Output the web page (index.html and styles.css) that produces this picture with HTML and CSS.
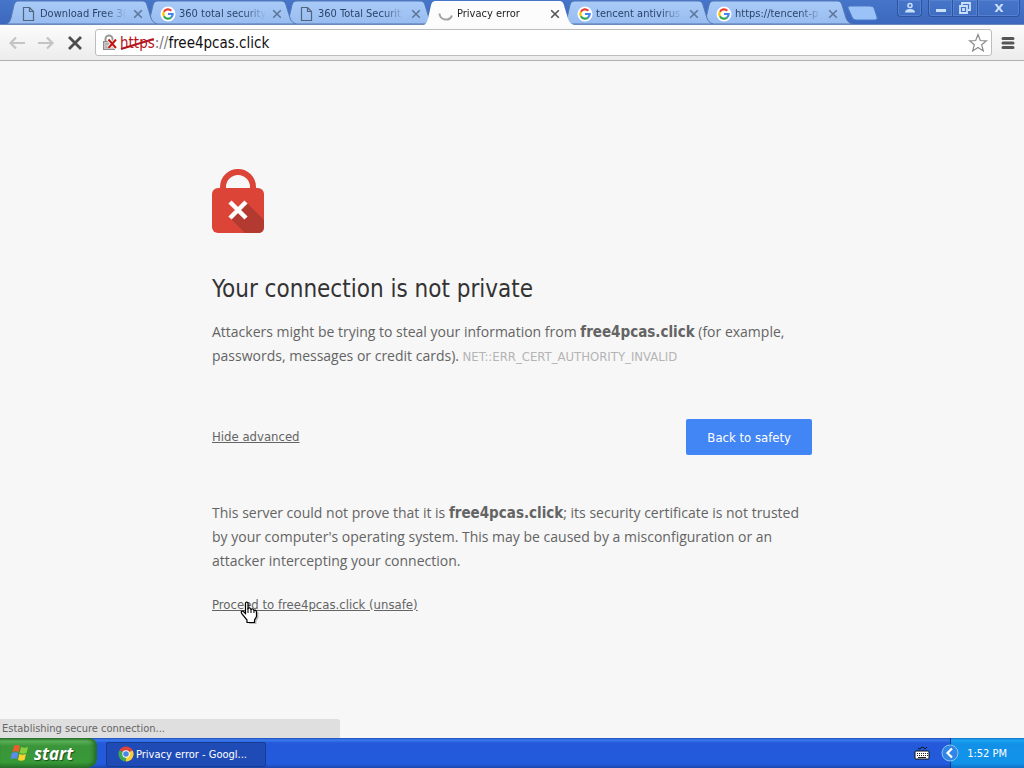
FILE: index.html
```html
<!DOCTYPE html>
<html lang="en">
<head>
    <meta charset="UTF-8">
    <meta name="viewport" content="width=device-width, initial-scale=1.0">
    <title>Privacy error</title>
    <link rel="stylesheet" href="styles.css">
</head>
<body>
    <!-- shared shapes -->
    <svg class="defs" width="0" height="0" aria-hidden="true">
        <defs>
            <linearGradient id="tabFill" x1="0" y1="0" x2="0" y2="1">
                <stop offset="0" stop-color="#a9cbf8"/>
                <stop offset="1" stop-color="#98bcf0"/>
            </linearGradient>
            <symbol id="tabShape" viewBox="0 0 150 24" preserveAspectRatio="none">
                <path d="M0 24C2 23 3 21 4 18L7 5C8 2 9 1 12 1H135C138 1 139 2 140 5L144 18C145 21 147 23 150 24Z"/>
            </symbol>
            <symbol id="doc" viewBox="0 0 16 16">
                <path d="M2.500 1.500H8.500L12.500 5.500V14.500H2.500ZM8.500 1.500V5.500H12.500" fill="none" stroke="#51657f" stroke-width="1.200"/>
            </symbol>
            <symbol id="google" viewBox="0 0 16 16">
                <circle cx="8" cy="8" r="7.500" fill="#fff"/>
                <g fill="none" stroke-width="2.200">
                    <path d="M3.900 5.700A4.700 4.700 0 0 1 11.300 4.700" stroke="#ea4335"/>
                    <path d="M3.900 10.300A4.700 4.700 0 0 1 3.900 5.700" stroke="#fbbc05"/>
                    <path d="M11 11.600A4.700 4.700 0 0 1 3.900 10.300" stroke="#34a853"/>
                    <path d="M8 8H12.700A4.700 4.700 0 0 1 11 11.600" stroke="#4285f4"/>
                </g>
            </symbol>
            <symbol id="cross" viewBox="0 0 10 10">
                <path d="M1.200 1.200L8.800 8.800M8.800 1.200L1.200 8.800" fill="none" stroke="currentColor" stroke-width="1.600"/>
            </symbol>
        </defs>
    </svg>

    <div class="window">
        <header class="tabstrip">
            <div class="tabs">
                <div class="tab">
                    <svg class="tab-bg"><use href="#tabShape"/></svg>
                    <svg class="favicon"><use href="#doc"/></svg>
                    <button class="tab-title">Download Free 3(</button>
                    <button class="tab-close" aria-label="Close tab"><svg><use href="#cross"/></svg></button>
                </div>
                <div class="tab">
                    <svg class="tab-bg"><use href="#tabShape"/></svg>
                    <svg class="favicon"><use href="#google"/></svg>
                    <button class="tab-title">360 total security</button>
                    <button class="tab-close" aria-label="Close tab"><svg><use href="#cross"/></svg></button>
                </div>
                <div class="tab">
                    <svg class="tab-bg"><use href="#tabShape"/></svg>
                    <svg class="favicon"><use href="#doc"/></svg>
                    <button class="tab-title">360 Total Securit</button>
                    <button class="tab-close" aria-label="Close tab"><svg><use href="#cross"/></svg></button>
                </div>
                <div class="tab active">
                    <svg class="tab-bg"><use href="#tabShape"/></svg>
                    <svg class="favicon" viewBox="0 0 16 16"><path d="M1.500 7.500A6.500 6.500 0 0 0 14 9.500" fill="none" stroke="#a3a3a3" stroke-width="2"/></svg>
                    <button class="tab-title">Privacy error</button>
                    <button class="tab-close" aria-label="Close tab"><svg><use href="#cross"/></svg></button>
                </div>
                <div class="tab">
                    <svg class="tab-bg"><use href="#tabShape"/></svg>
                    <svg class="favicon"><use href="#google"/></svg>
                    <button class="tab-title">tencent antivirus</button>
                    <button class="tab-close" aria-label="Close tab"><svg><use href="#cross"/></svg></button>
                </div>
                <div class="tab">
                    <svg class="tab-bg"><use href="#tabShape"/></svg>
                    <svg class="favicon"><use href="#google"/></svg>
                    <button class="tab-title">https://tencent-p</button>
                    <button class="tab-close" aria-label="Close tab"><svg><use href="#cross"/></svg></button>
                </div>
            </div>
            <button class="new-tab" aria-label="New tab">
                <svg width="32" height="16" viewBox="0 0 32 16"><path d="M3 1H23Q26 1 27 3L30 12Q31 15 28 15H9Q6 15 5 12L1 3Q0 1 3 1Z" fill="#9cc3f7" stroke="#4a7bc9"/></svg>
            </button>
            <div class="window-controls">
                <button class="control user" aria-label="User">
                    <svg width="12" height="12" viewBox="0 0 12 12"><circle cx="6" cy="3.500" r="2" fill="none" stroke="#c9e0fb" stroke-width="1.500"/><path d="M1 10.500Q1 7 6 7T11 10.500Z" fill="#c9e0fb"/></svg>
                </button>
                <div class="control-group">
                    <button class="control minimize" aria-label="Minimize">
                        <svg width="12" height="12" viewBox="0 0 12 12"><rect x="1" y="7" width="10" height="3" fill="#c9e0fb"/></svg>
                    </button>
                    <button class="control restore" aria-label="Restore">
                        <svg width="14" height="14" viewBox="0 0 14 14"><path d="M4 4V2H12V9H10M2 5H9V12H2ZM5 8H6V9H5Z" fill="none" stroke="#c9e0fb" stroke-width="1.800"/></svg>
                    </button>
                    <button class="control close" aria-label="Close">
                        <svg width="12" height="12" viewBox="0 0 12 12"><path d="M1.500 2H4L6 4.500L8 2H10.500L7.500 6L10.500 10H8L6 7.500L4 10H1.500L4.500 6Z" fill="#c9e0fb"/></svg>
                    </button>
                </div>
            </div>
        </header>

        <nav class="toolbar">
            <button class="tool" aria-label="Back">
                <svg width="18" height="16" viewBox="0 0 18 16"><path d="M17 8H3M8 2.500L2.500 8L8 13.500" fill="none" stroke="#c4c4c4" stroke-width="2.200"/></svg>
            </button>
            <button class="tool" aria-label="Forward">
                <svg width="18" height="16" viewBox="0 0 18 16"><path d="M1 8H15M10 2.500L15.500 8L10 13.500" fill="none" stroke="#c4c4c4" stroke-width="2.200"/></svg>
            </button>
            <button class="tool" aria-label="Stop">
                <svg width="18" height="16" viewBox="0 0 18 16"><path d="M3 2L15 14M15 2L3 14" fill="none" stroke="#4d4d4d" stroke-width="2.800"/></svg>
            </button>
            <div class="omnibox">
                <svg width="16" height="18" viewBox="0 0 16 18">
                    <path d="M3.500 8V5A3.500 3.500 0 0 1 10.500 5V8" fill="none" stroke="#999" stroke-width="2"/>
                    <rect x="1.500" y="7.500" width="11" height="8" fill="#c6c6c6" stroke="#8b8b8b"/>
                    <path d="M3 10H9M3 13H9" stroke="#a2a2a2"/>
                    <path d="M6.500 5.500L14 14M14 5.500L6.500 14" stroke="#fff" stroke-width="3.500"/>
                    <path d="M6.500 5.500L14 14M14 5.500L6.500 14" stroke="#c1150f" stroke-width="2"/>
                </svg>
                <label class="scheme" for="url"><span class="bad">https<svg class="strike" viewBox="0 0 36 14" preserveAspectRatio="none"><path d="M1 12L35 2" stroke="#b4141c" stroke-width="2"/></svg></span>://</label>
                <input id="url" class="url" type="text" value="free4pcas.click">
                <button class="star" aria-label="Bookmark this page">
                    <svg width="20" height="20" viewBox="0 0 20 20"><path d="M10 1.500L12.300 7.500L18.500 7.800L13.700 11.800L15.300 18L10 14.500L4.700 18L6.300 11.800L1.500 7.800L7.700 7.500Z" fill="#fff" stroke="#8a8a8a" stroke-width="1.200"/></svg>
                </button>
            </div>
            <button class="menu" aria-label="Menu">
                <svg width="14" height="14" viewBox="0 0 14 14"><path d="M2 2.500H12M2 7H12M2 11.500H12" stroke="#555" stroke-width="3" stroke-linecap="round"/></svg>
            </button>
        </nav>

        <main class="page">
            <div class="interstitial">
                <svg class="lock" width="52" height="64" viewBox="0 0 52 64">
                    <path d="M11 22V18A15 15 0 0 1 41 18V22" fill="none" stroke="#db4437" stroke-width="6"/>
                    <rect y="19" width="52" height="45" rx="6" fill="#db4437"/>
                    <path d="M34 33L52 51V58Q52 64 46 64H33L18 49L26 41Z" fill="#b23a31"/>
                    <path d="M18 33L34 49M34 33L18 49" stroke="#fff" stroke-width="4.500"/>
                </svg>
                <h1>Your connection is not private</h1>
                <p>Attackers might be trying to steal your information from <strong>free4pcas.click</strong> (for example, passwords, messages or credit cards). <span class="error-code">NET::ERR_CERT_AUTHORITY_INVALID</span></p>
                <div class="actions">
                    <a class="small-link" href="#details">Hide advanced</a>
                    <button class="primary">Back to safety</button>
                </div>
                <div id="details">
                    <p>This server could not prove that it is <strong>free4pcas.click</strong>; its security certificate is not trusted by your computer's operating system. This may be caused by a misconfiguration or an attacker intercepting your connection.</p>
                    <div class="proceed">
                        <a class="small-link" href="#proceed">Proceed to free4pcas.click (unsafe)</a>
                        <svg class="cursor" width="20" height="24" viewBox="0 0 20 24">
                            <path d="M6 2Q7 0 8 2V8Q10 6 11 8.500Q13 7 14 9.500Q16 8.500 16.500 11V16L14.500 19V22H7V19L2 13Q0 10 3 10L6 13Z" transform="translate(2 1)" fill="#000" opacity=".25"/>
                            <path d="M5.500 2Q6.500 0 8 2V7.500Q10 6 11 8.500Q13 7 14 9.500Q16 8.500 16.500 11V15.500L14.500 19V21.500H7V19L2 13Q0 10 3 10L5.500 12.500Z" fill="#fff" stroke="#000" stroke-width="1.200"/>
                            <path d="M8 7V12M11 8.500V12M14 9.500V12" stroke="#000"/>
                        </svg>
                    </div>
                </div>
            </div>
            <div class="status">Establishing secure connection...</div>
        </main>

        <footer class="taskbar">
            <button class="start">
                <svg width="20" height="18" viewBox="0 0 20 18">
                    <path d="M4 2Q7 0 10 2L8.500 8Q5.500 6.500 2.500 8Z" fill="#ee5c2c"/>
                    <path d="M11 3Q14 4.500 18 3L16.500 9Q13 10.500 9.500 9Z" fill="#86cf3b"/>
                    <path d="M2 9Q5 7.500 8.300 9L7 15Q4 13.500 0.500 15Z" fill="#5a8cf0"/>
                    <path d="M9.300 10Q12.500 11.500 16 10L14.500 16Q11 17.500 8 16Z" fill="#fbd130"/>
                </svg>
                <span>start</span>
            </button>
            <button class="task">
                <svg width="16" height="16" viewBox="0 0 16 16">
                    <path d="M8 8L1.500 4.200A7.500 7.500 0 0 1 14.500 4.200Z" fill="#e0453a"/>
                    <path d="M8 8L14.500 4.200A7.500 7.500 0 0 1 8 15.500Z" fill="#fbcf3a"/>
                    <path d="M8 8V15.500A7.500 7.500 0 0 1 1.500 4.200Z" fill="#42a754"/>
                    <path d="M8 4.200H14.500V5H8Z" fill="#e0453a"/>
                    <circle cx="8" cy="8" r="3.700" fill="#fff"/>
                    <circle cx="8" cy="8" r="2.800" fill="#4a86e4"/>
                </svg>
                <span>Privacy error - Googl...</span>
            </button>
            <svg class="keyboard" width="16" height="14" viewBox="0 0 16 14">
                <path d="M4 2Q5 4 7 2T10 2T13 1" fill="none" stroke="#111"/>
                <rect x="1" y="5" width="14" height="8" rx="1" fill="#fff" stroke="#111"/>
                <path d="M3 7.500H14M3 9.500H14" stroke="#222" stroke-dasharray="1 1"/>
                <path d="M4 11.500H12" stroke="#222"/>
            </svg>
            <div class="tray">
                <button class="expand" aria-label="Show hidden icons">
                    <svg width="18" height="18" viewBox="0 0 18 18"><circle cx="9" cy="9" r="8" fill="#2f86e4" stroke="#8cc4f5"/><path d="M11 4.500L6.500 9L11 13.500" fill="none" stroke="#fff" stroke-width="2.200"/></svg>
                </button>
                <time>1:52 PM</time>
            </div>
        </footer>
    </div>
</body>
</html>
```
FILE: styles.css
```css
* {
    margin: 0;
    padding: 0;
    box-sizing: border-box;
}

body {
    font-family: "DejaVu Sans Condensed", "DejaVu Sans", sans-serif;
    font-size: 11px;
    color: #646464;
    background: #f7f7f7;
}

button {
    font: inherit;
    color: inherit;
    background: none;
    border: none;
}

svg {
    display: block;
    flex-shrink: 0;
}

.defs {
    position: absolute;
}

.window {
    display: flex;
    flex-direction: column;
    min-height: 100vh;
}

/* Tabs */
.tabstrip {
    display: flex;
    height: 25px;
    background: linear-gradient(#4675ca, #3c68bd);
    border-bottom: 1px solid #6c89b8;
}

.tabs {
    display: flex;
    padding-left: 7px;
}

.tab {
    position: relative;
    display: flex;
    align-items: center;
    width: 150px;
    height: 25px;
    margin-right: -11px;
    padding: 2px 12px 0 14px;
    color: #2c4468;
}

/* each tab lies over the one on its right */
.tab:nth-child(1) {
    z-index: 5;
}

.tab:nth-child(2) {
    z-index: 4;
}

.tab:nth-child(3) {
    z-index: 3;
}

.tab:nth-child(5) {
    z-index: 2;
}

.tab.active {
    z-index: 6;
    color: #222;
}

.tab-bg {
    position: absolute;
    left: 0;
    top: 0;
    width: 150px;
    height: 24px;
    fill: url(#tabFill);
    stroke: #5379b4;
}

.tab.active .tab-bg {
    height: 25px;
    fill: #fcfcfc;
    stroke: none;
}

.favicon {
    position: relative;
    width: 16px;
    height: 16px;
}

.tab-title {
    position: relative;
    flex: 1;
    height: 18px;
    margin: 0 6px 0 3px;
    overflow: hidden;
    text-align: left;
    white-space: nowrap;
    -webkit-mask-image: linear-gradient(to right, #000 75%, transparent);
    mask-image: linear-gradient(to right, #000 75%, transparent);
}

.tab-close {
    position: relative;
    margin-right: 2px;
    color: #5f7698;
}

.active .tab-close {
    color: #555;
}

.tab-close svg {
    width: 10px;
    height: 10px;
}

.new-tab {
    align-self: flex-start;
    margin: 5px 0 0 6px;
}

.window-controls {
    display: flex;
    align-items: flex-start;
    gap: 6px;
    margin-left: auto;
    padding-right: 4px;
}

.control-group {
    display: flex;
}

.control {
    display: flex;
    align-items: center;
    justify-content: center;
    width: 25px;
    height: 17px;
    border: 1px solid #2d559f;
    border-top: none;
    box-shadow: inset 0 0 0 1px #5580d0;
}

.control + .control {
    border-left: none;
}

.user {
    border-radius: 0 0 4px 4px;
}

.minimize {
    border-radius: 0 0 0 4px;
}

.close {
    width: 42px;
    border-radius: 0 0 4px 0;
}

/* Toolbar */
.toolbar {
    display: flex;
    align-items: center;
    height: 36px;
    padding: 0 9px 0 8px;
    background: linear-gradient(#fcfcfc, #ececec);
    border-bottom: 1px solid #b0b0b0;
}

.tool {
    margin-right: 11px;
}

.omnibox {
    display: flex;
    flex: 1;
    align-items: center;
    height: 27px;
    margin-right: 9px;
    padding: 0 3px 0 6px;
    font-size: 15px;
    background: #fff;
    border: 1px solid #bdbdbd;
    border-radius: 3px;
}

.scheme {
    margin-left: 2px;
    color: #777;
}

.bad {
    position: relative;
    color: #b4141c;
}

.strike {
    position: absolute;
    left: 0;
    top: 3px;
    width: 100%;
    height: 14px;
}

.url {
    flex: 1;
    min-width: 0;
    font: inherit;
    color: #111;
    background: none;
    border: none;
    outline: none;
}

/* Warning page */
.page {
    position: relative;
    flex: 1;
    padding: 108px 16px 40px;
    background: #f7f7f7;
}

.interstitial {
    max-width: 600px;
    margin: 0 auto;
}

h1 {
    margin: 41px 0 15px;
    font-size: 24px;
    font-weight: normal;
    line-height: 31px;
    color: #333;
}

p {
    font-family: "Open Sans", sans-serif;
    font-size: 14px;
    line-height: 24px;
}

strong,
.error-code {
    font-family: "DejaVu Sans Condensed", "DejaVu Sans", sans-serif;
    line-height: 16px;
}

strong {
    font-size: 15px;
}

.error-code {
    font-size: 13px;
    color: #b4b4b4;
}

.actions {
    display: flex;
    align-items: center;
    justify-content: space-between;
    margin: 51px 0 46px;
}

.small-link {
    font-size: 13px;
    line-height: 24px;
    color: #646464;
}

.primary {
    height: 36px;
    padding: 0 21px;
    font-size: 13px;
    color: #fff;
    background: #4285f4;
    border-radius: 2px;
}

.proceed {
    position: relative;
    margin-top: 20px;
}

.cursor {
    position: absolute;
    left: 28px;
    top: 8px;
}

.status {
    position: absolute;
    left: 0;
    bottom: 0;
    width: 340px;
    height: 19px;
    padding-left: 2px;
    line-height: 20px;
    color: #666;
    background: #dfdfdf;
    border-top-right-radius: 3px;
}

/* Taskbar */
.taskbar {
    display: flex;
    align-items: center;
    height: 30px;
    color: #fff;
    background: linear-gradient(#1f4fb8 0, #3a7bee 2px, #2459d9 5px, #225bdc 26px, #1c46ad 30px);
}

.start {
    display: flex;
    align-items: center;
    gap: 4px;
    width: 97px;
    height: 30px;
    padding-left: 10px;
    font-family: "Open Sans", sans-serif;
    font-size: 17px;
    font-style: italic;
    font-weight: bold;
    text-shadow: 1px 1px 1px #1b4d1b;
    background: linear-gradient(#2d742c 0, #5cb35a 3px, #3b9439 8px, #379a37 24px, #2a752a 30px);
    border-radius: 0 8px 10px 0;
    box-shadow: inset -3px 0 4px #23692a;
}

.task {
    display: flex;
    align-items: center;
    gap: 2px;
    width: 160px;
    height: 25px;
    margin: 2px 0 0 9px;
    padding-left: 11px;
    white-space: nowrap;
    background: #1e4bb5;
    border: 1px solid #173c94;
    border-radius: 2px;
}

.keyboard {
    margin-left: auto;
}

.tray {
    display: flex;
    align-items: center;
    gap: 8px;
    height: 30px;
    margin-left: 20px;
    padding-right: 17px;
    background: linear-gradient(#1270c4 0, #1ba5f2 2px, #1290e8 6px, #1193ea 25px, #0f72c5 30px);
    border-left: 1px solid #0c3d8d;
}

.expand {
    margin-left: -10px;
}
```
